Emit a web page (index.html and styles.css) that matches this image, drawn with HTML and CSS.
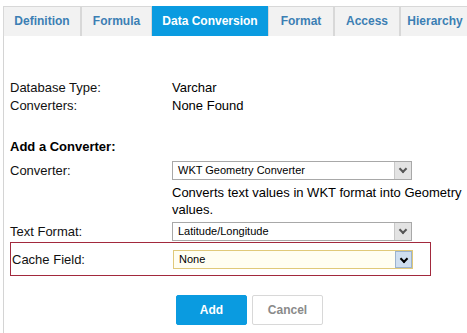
FILE: index.html
```html
<!DOCTYPE html>
<html lang="en">
<head>
    <meta charset="UTF-8">
    <title>Data Conversion</title>
    <link rel="stylesheet" href="styles.css">
</head>
<body>

<!-- Tab strip -->
<nav class="tabs">
    <div class="tab" style="width:78px">Definition</div>
    <div class="tab" style="width:71px">Formula</div>
    <div class="tab active" style="width:116px">Data Conversion</div>
    <div class="tab" style="width:66px">Format</div>
    <div class="tab" style="width:66px">Access</div>
    <div class="tab" style="width:70px">Hierarchy</div>
</nav>

<div class="panel">
    <!-- Current state -->
    <div class="row">
        <span class="label">Database Type:</span>
        <span>Varchar</span>
    </div>
    <div class="row">
        <span class="label">Converters:</span>
        <span>None Found</span>
    </div>

    <h2>Add a Converter:</h2>

    <div class="row field">
        <span class="label">Converter:</span>
        <div class="select"><span>WKT Geometry Converter</span><i class="arrow"></i></div>
    </div>
    <p class="hint">Converts text values in WKT format into Geometry values.</p>

    <div class="row field">
        <span class="label">Text Format:</span>
        <div class="select"><span>Latitude/Longitude</span><i class="arrow"></i></div>
    </div>

    <div class="row field highlight">
        <span class="label">Cache Field:</span>
        <div class="select focused"><span>None</span><i class="arrow"></i></div>
    </div>

    <div class="buttons">
        <button class="btn primary">Add</button>
        <button class="btn">Cancel</button>
    </div>
</div>

</body>
</html>
```

FILE: styles.css
```css
* {
    box-sizing: border-box;
    margin: 0;
    padding: 0;
}

body {
    font-family: 'Liberation Sans', Arial, sans-serif;
    font-size: 13px;
    color: #000;
    background: #fff;
    padding: 6px 0 0 3px;
    width: 467px;
    height: 333px;
    overflow: hidden;
}

/* Tabs */
.tabs {
    display: flex;
    height: 30px;
    border-bottom: 1px solid #d4d4d4;
    white-space: nowrap;
}

.tab {
    flex: none;
    height: 30px;
    line-height: 28px;
    text-align: center;
    font-size: 12px;
    font-weight: bold;
    color: #3c7fb4;
    background: #f2f2f2;
    border: 1px solid #d8d8d8;
    border-bottom: none;
}

.tab.active {
    background: #0a9be0;
    border-color: #0a9be0;
    color: #fff;
}

/* Content panel */
.panel {
    border-left: 1px solid #d4d4d4;
    height: 300px;
    padding: 42px 0 0 6px;
}

.row {
    display: grid;
    grid-template-columns: 162px 240px;
    align-items: center;
    height: 18px;
}

.label {
    color: #111;
}

h2 {
    font-size: 13px;
    font-weight: bold;
    margin: 25px 0 5px;
}

.field {
    height: 22px;
}

.hint {
    margin: 3px 0 2px 162px;
    width: 300px;
    line-height: 17px;
}

.highlight {
    width: 421px;
    height: 34px;
    border: 1px solid #a2293d;
    grid-template-columns: 161px 240px;
    padding-left: 1px;
}

/* Fake select boxes */
.select {
    display: flex;
    justify-content: space-between;
    align-items: center;
    height: 19px;
    border: 1px solid #a8a8a8;
    background: #fff;
    font-size: 11px;
    padding-left: 5px;
}

.arrow {
    width: 17px;
    height: 17px;
    background: #e3e3e3;
    border-left: 1px solid #c8c8c8;
    position: relative;
}

.arrow::after {
    content: "";
    position: absolute;
    left: 5px;
    top: 4px;
    width: 4px;
    height: 4px;
    border-right: 2px solid #555;
    border-bottom: 2px solid #555;
    transform: rotate(45deg);
}

.select.focused {
    border-color: #e0c97a;
    background: #fffef2;
}

.select.focused .arrow {
    background: #cfdff0;
    border: 1px solid #9bb3cf;
}

.select.focused .arrow::after {
    border-color: #000;
}

/* Buttons */
.buttons {
    display: flex;
    gap: 5px;
    margin: 19px 0 0 166px;
}

.btn {
    font-family: 'Liberation Sans', Arial, sans-serif;
    font-size: 12px;
    font-weight: bold;
    width: 71px;
    height: 30px;
    border: 1px solid #d8d8d8;
    border-radius: 2px;
    background: #fff;
    color: #8a8a8a;
}

.btn.primary {
    background: #0a9be0;
    border-color: #0a9be0;
    color: #fff;
}
```
